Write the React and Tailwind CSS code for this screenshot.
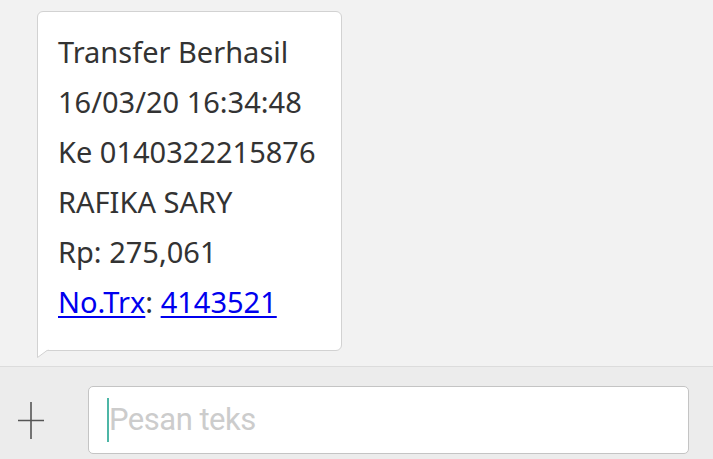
import React from 'react';

export default function App() {
    const lines = ['Transfer Berhasil', '16/03/20 16:34:48', 'Ke 0140322215876', 'RAFIKA SARY', 'Rp: 275,061'];

    return (
        <div className="w-[713px] h-[459px] bg-[#f2f2f2] flex flex-col overflow-hidden" style={{ fontFamily: '"Noto Sans", sans-serif' }}>
            {/* Messages */}
            <div className="flex-1 pt-[11px] pl-[37px]">
                <div className="relative w-[305px] h-[340px] bg-white border border-[#d2d2d2] rounded-[6px] rounded-bl-none pl-[20px] pt-[15px] text-[#333333] text-[29px] leading-[50px]">
                    {lines.map((l) => (
                        <div key={l}>{l}</div>
                    ))}
                    <div>
                        <a href="#" className="text-[#0000ee] underline underline-offset-[3px] decoration-[1.5px]">No.Trx</a>
                        <span>: </span>
                        <a href="#" className="text-[#0000ee] underline underline-offset-[3px] decoration-[1.5px]">4143521</a>
                    </div>
                    {/* tail */}
                    <svg className="absolute left-[-1px] bottom-[-8px]" width="14" height="9" viewBox="0 0 14 9">
                        <path d="M0.5 0 L0.5 8.5 L12 0" fill="#ffffff" stroke="#d2d2d2" strokeWidth="1" />
                        <path d="M1 0 L13 0" stroke="#ffffff" strokeWidth="1.5" />
                    </svg>
                </div>
            </div>

            {/* Composer */}
            <div className="h-[93px] bg-[#ececec] border-t border-[#dcdcdc] flex items-start pt-[19px] pl-[18px] pr-[24px]">
                <svg width="26" height="38" viewBox="0 0 26 38" className="shrink-0 mt-[16px]">
                    <path d="M0 18.5 H26 M13 0 V37" stroke="#555555" strokeWidth="1.6" />
                </svg>
                <div className="ml-[44px] flex-1 h-[68px] bg-white border border-[#c4c4c4] rounded-[5px] flex items-center pl-[18px]">
                    <div className="w-[2px] h-[44px] bg-[#4db6a6]" />
                    <span className="text-[#cccccc] text-[31px] tracking-[-0.5px]" style={{ fontFamily: 'Roboto, sans-serif' }}>Pesan teks</span>
                </div>
            </div>
        </div>
    );
}
